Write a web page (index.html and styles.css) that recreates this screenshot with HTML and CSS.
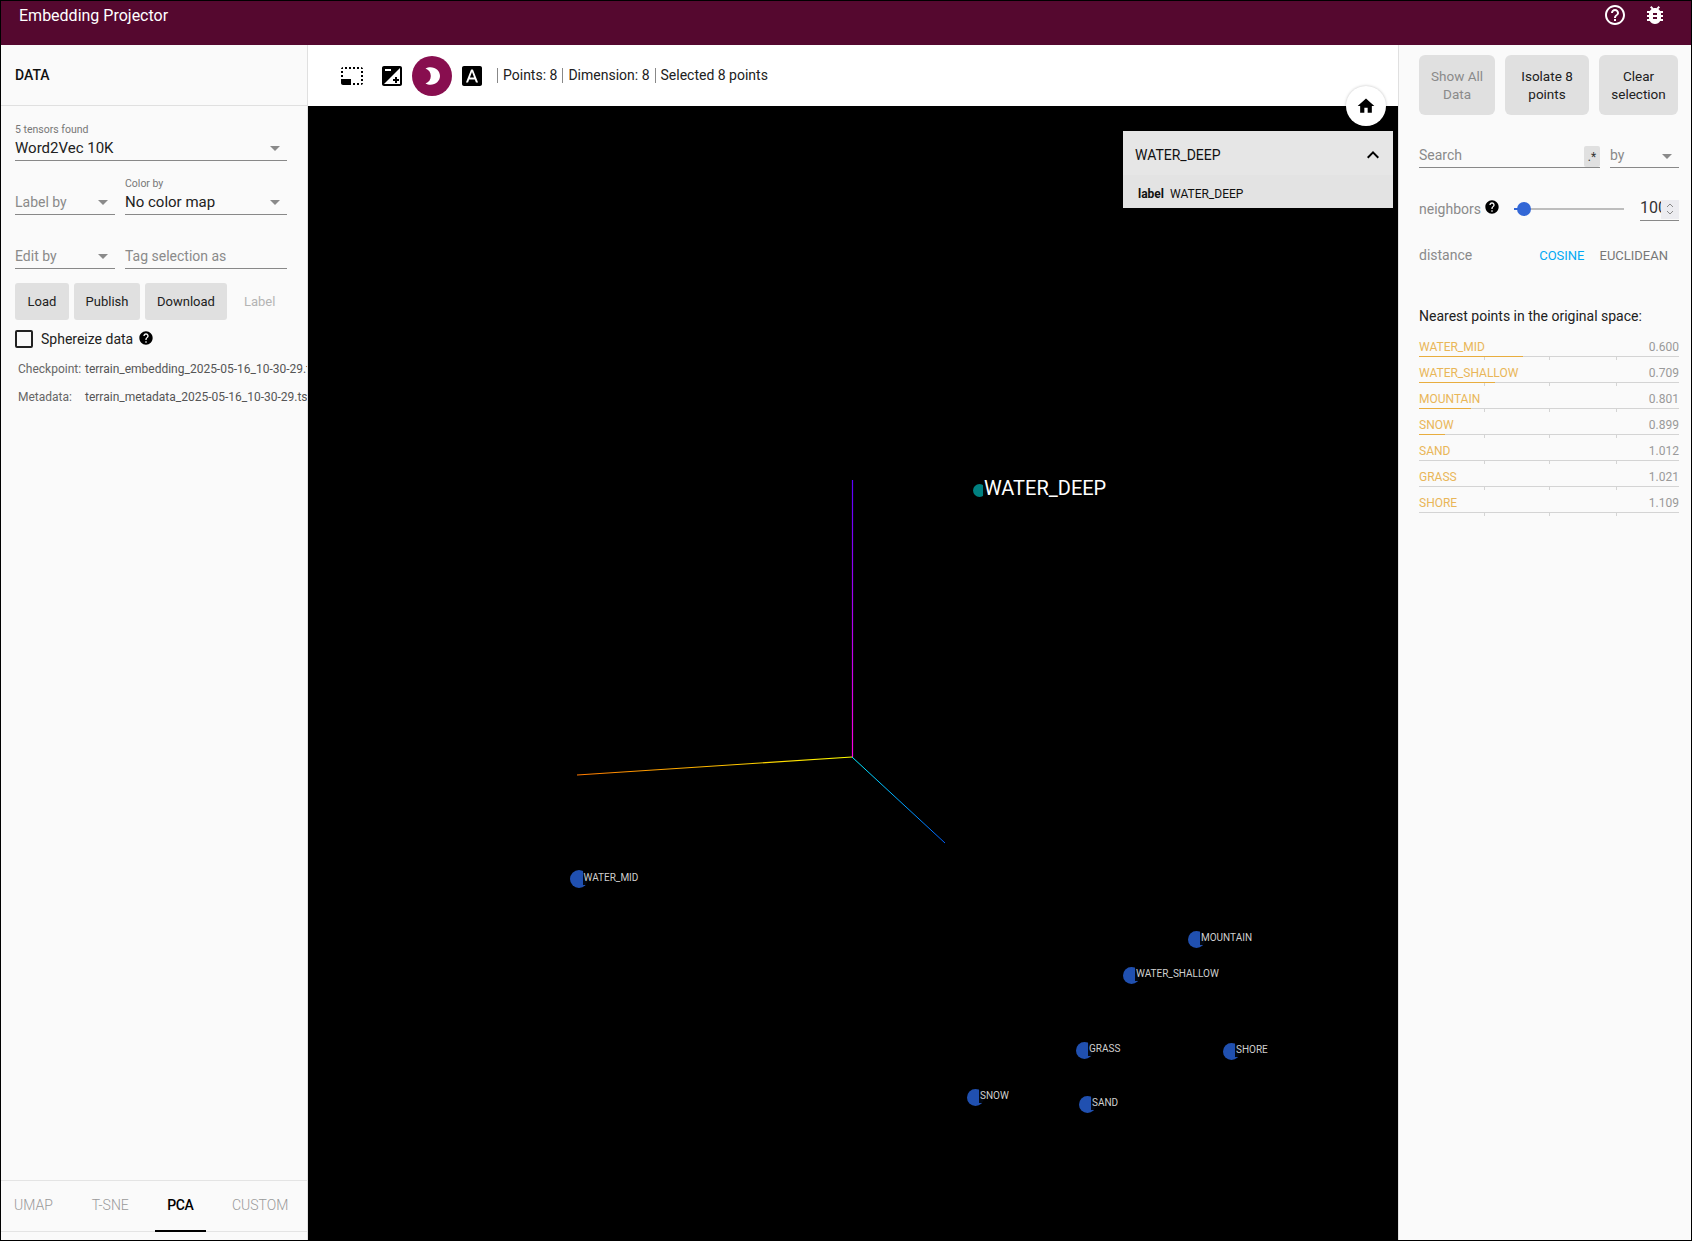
FILE: index.html
```html
<!DOCTYPE html>
<html lang="en">
<head>
    <meta charset="UTF-8">
    <meta name="viewport" content="width=device-width, initial-scale=1.0">
    <title>Embedding Projector</title>
    <link rel="stylesheet" href="styles.css">
</head>
<body>
    <div class="app">
        <header class="topbar">
            <span class="brand">Embedding Projector</span>
            <div class="topbar-icons">
                <svg class="icon" viewBox="0 0 24 24"><path d="M11 18h2v-2h-2v2zm1-16C6.48 2 2 6.48 2 12s4.48 10 10 10 10-4.48 10-10S17.52 2 12 2zm0 18c-4.41 0-8-3.59-8-8s3.59-8 8-8 8 3.59 8 8-3.59 8-8 8zm0-14c-2.21 0-4 1.79-4 4h2c0-1.1.9-2 2-2s2 .9 2 2c0 2-3 1.75-3 5h2c0-2.25 3-2.5 3-5 0-2.21-1.79-4-4-4z"/></svg>
                <svg class="icon" viewBox="0 0 24 24"><path d="M20 8h-2.81c-.45-.78-1.07-1.45-1.82-1.96L17 4.41 15.59 3l-2.17 2.17C12.96 5.06 12.49 5 12 5c-.49 0-.96.06-1.41.17L8.41 3 7 4.41l1.62 1.63C7.88 6.55 7.26 7.22 6.81 8H4v2h2.09c-.05.33-.09.66-.09 1v1H4v2h2v1c0 .34.04.67.09 1H4v2h2.81c1.04 1.79 2.97 3 5.19 3s4.15-1.21 5.19-3H20v-2h-2.09c.05-.33.09-.66.09-1v-1h2v-2h-2v-1c0-.34-.04-.67-.09-1H20V8zm-6 8h-4v-2h4v2zm0-4h-4v-2h4v2z"/></svg>
            </div>
        </header>

        <div class="main">
            <!-- Left: data panel -->
            <aside class="data-panel">
                <div class="data-head">DATA</div>
                <div class="data-body">
                    <div class="field">
                        <div class="field-label">5 tensors found</div>
                        <div class="field-value">Word2Vec 10K<span class="caret"></span></div>
                    </div>
                    <div class="field-row">
                        <div class="field narrow">
                            <div class="field-label"></div>
                            <div class="field-value muted">Label by<span class="caret"></span></div>
                        </div>
                        <div class="field wide">
                            <div class="field-label">Color by</div>
                            <div class="field-value">No color map<span class="caret"></span></div>
                        </div>
                    </div>
                    <div class="field-row">
                        <div class="field narrow">
                            <div class="field-label"></div>
                            <div class="field-value muted">Edit by<span class="caret"></span></div>
                        </div>
                        <div class="field wide">
                            <div class="field-label"></div>
                            <div class="field-value muted">Tag selection as</div>
                        </div>
                    </div>
                    <div class="data-buttons">
                        <button class="btn btn-load">Load</button>
                        <button class="btn btn-publish">Publish</button>
                        <button class="btn btn-download">Download</button>
                        <span class="btn-label">Label</span>
                    </div>
                    <div class="sphereize">
                        <span class="checkbox"></span>
                        <span>Sphereize data</span>
                        <svg class="help" viewBox="0 0 24 24"><path d="M12 2C6.48 2 2 6.48 2 12s4.48 10 10 10 10-4.48 10-10S17.52 2 12 2zm1 17h-2v-2h2v2zm2.07-7.75l-.9.92C13.45 12.9 13 13.5 13 15h-2v-.5c0-1.1.45-2.1 1.17-2.83l1.24-1.26c.37-.36.59-.86.59-1.41 0-1.1-.9-2-2-2s-2 .9-2 2H8c0-2.21 1.79-4 4-4s4 1.79 4 4c0 .88-.36 1.68-.93 2.25z"/></svg>
                    </div>
                    <div class="file-row file-first"><span class="file-key">Checkpoint:</span><span>terrain_embedding_2025-05-16_10-30-29.tsv</span></div>
                    <div class="file-row"><span class="file-key">Metadata:</span><span>terrain_metadata_2025-05-16_10-30-29.tsv</span></div>
                </div>
                <div class="tabs">
                    <span class="tab">UMAP</span>
                    <span class="tab">T-SNE</span>
                    <span class="tab active">PCA</span>
                    <span class="tab">CUSTOM</span>
                </div>
            </aside>

            <!-- Center: toolbar and scene -->
            <section class="center">
                <div class="toolbar">
                    <svg class="tool" viewBox="0 0 24 24"><path d="M23 15h-2v2h2v-2zm0-4h-2v2h2v-2zm0 8h-2v2c1 0 2-1 2-2zM15 3h-2v2h2V3zm8 4h-2v2h2V7zm-2-4v2h2c0-1-1-2-2-2zM3 21h8v-6H1v4c0 1.1.9 2 2 2zM3 7H1v2h2V7zm12 12h-2v2h2v-2zm4-16h-2v2h2V3zm0 16h-2v2h2v-2zM3 3C2 3 1 4 1 5h2V3zm0 8H1v2h2v-2zm8-8H9v2h2V3zM7 3H5v2h2V3z"/></svg>
                    <svg class="tool tool-contrast" viewBox="0 0 24 24"><path d="M15 17v2h2v-2h2v-2h-2v-2h-2v2h-2v2h2zm5-15H4c-1.1 0-2 .9-2 2v16c0 1.1.9 2 2 2h16c1.1 0 2-.9 2-2V4c0-1.1-.9-2-2-2zM5 5h6v2H5V5zm15 15H4L20 4v16z"/></svg>
                    <span class="night-btn">
                        <svg class="tool" viewBox="0 0 24 24"><path d="M5.5 4.5C7 3.6 8.8 3.3 10.5 3.3c5.3 0 9.5 3.9 9.5 8.7s-4.2 8.700-9.500 8.700c-1.700 0-3.500-.3-5-1.200 3.300-1.100 5.300-4 5.300-7.500s-2-6.400-5.300-7.500z"/></svg>
                    </span>
                    <svg class="tool" viewBox="0 0 24 24"><path d="M9.93 13.5h4.14L12 7.98zM20 2H4c-1.1 0-2 .9-2 2v16c0 1.1.9 2 2 2h16c1.1 0 2-.9 2-2V4c0-1.1-.9-2-2-2zm-4.05 16.5l-1.14-3H9.17l-1.12 3H5.96l5.11-13h1.86l5.11 13h-2.09z"/></svg>
                    <div class="stats">
                        <span class="stat">Points: 8</span>
                        <span class="stat">Dimension: 8</span>
                        <span class="stat">Selected 8 points</span>
                    </div>
                </div>

                <div class="scene">
                    <svg class="axes" width="1090" height="1134">
                        <defs>
                            <linearGradient id="axisY" gradientUnits="userSpaceOnUse" x1="544" y1="374" x2="544" y2="651">
                                <stop offset="0" stop-color="#5a00ff"/>
                                <stop offset="1" stop-color="#ff00e0"/>
                            </linearGradient>
                            <linearGradient id="axisX" gradientUnits="userSpaceOnUse" x1="269" y1="669" x2="544" y2="651">
                                <stop offset="0" stop-color="#ff7a00"/>
                                <stop offset="1" stop-color="#ffff00"/>
                            </linearGradient>
                            <linearGradient id="axisZ" gradientUnits="userSpaceOnUse" x1="544" y1="651" x2="637" y2="737">
                                <stop offset="0" stop-color="#00f0ff"/>
                                <stop offset="1" stop-color="#0060ff"/>
                            </linearGradient>
                        </defs>
                        <line x1="544.5" y1="374" x2="544.5" y2="651" stroke="url(#axisY)" stroke-width="1.2"/>
                        <line x1="269" y1="669" x2="544" y2="651" stroke="url(#axisX)" stroke-width="1.2"/>
                        <line x1="544" y1="651" x2="637" y2="737" stroke="url(#axisZ)" stroke-width="1"/>
                    </svg>

                    <div class="pin selected" style="left:671px;top:384px"><span class="dot"></span><span class="pin-label">WATER_DEEP</span></div>
                    <div class="pin big" style="left:270.5px;top:773px"><span class="dot"></span><span class="pin-label">WATER_MID</span></div>
                    <div class="pin" style="left:888px;top:833px"><span class="dot"></span><span class="pin-label">MOUNTAIN</span></div>
                    <div class="pin" style="left:823px;top:869px"><span class="dot"></span><span class="pin-label">WATER_SHALLOW</span></div>
                    <div class="pin" style="left:776px;top:944px"><span class="dot"></span><span class="pin-label">GRASS</span></div>
                    <div class="pin" style="left:923px;top:945px"><span class="dot"></span><span class="pin-label">SHORE</span></div>
                    <div class="pin" style="left:667px;top:991px"><span class="dot"></span><span class="pin-label">SNOW</span></div>
                    <div class="pin" style="left:779px;top:998px"><span class="dot"></span><span class="pin-label">SAND</span></div>

                    <div class="inspector">
                        <div class="inspector-head">
                            <span>WATER_DEEP</span>
                            <svg class="chevron" viewBox="0 0 24 24"><path d="M7.41 15.41L12 10.83l4.59 4.58L18 14l-6-6-6 6z"/></svg>
                        </div>
                        <div class="inspector-row"><b>label</b><span>WATER_DEEP</span></div>
                    </div>
                </div>

                <span class="home-btn">
                    <svg viewBox="0 0 24 24"><path d="M10 20v-6h4v6h5v-8h3L12 3 2 12h3v8z"/></svg>
                </span>
            </section>

            <!-- Right: inspector panel -->
            <aside class="inspect-panel">
                <div class="inspect-buttons">
                    <button class="btn btn-show" disabled>Show All Data</button>
                    <button class="btn btn-isolate">Isolate 8 points</button>
                    <button class="btn btn-clear">Clear selection</button>
                </div>
                <div class="search-row">
                    <div class="search-box">Search<span class="regex">.*</span></div>
                    <div class="by-box">by<span class="caret"></span></div>
                </div>
                <div class="neighbors-row">
                    <span class="neighbors-label">neighbors</span>
                    <svg class="help" viewBox="0 0 24 24"><path d="M12 2C6.48 2 2 6.48 2 12s4.48 10 10 10 10-4.48 10-10S17.52 2 12 2zm1 17h-2v-2h2v2zm2.07-7.75l-.9.92C13.45 12.9 13 13.5 13 15h-2v-.5c0-1.1.45-2.1 1.17-2.83l1.24-1.26c.37-.36.59-.86.59-1.41 0-1.1-.9-2-2-2s-2 .9-2 2H8c0-2.21 1.79-4 4-4s4 1.79 4 4c0 .88-.36 1.68-.93 2.25z"/></svg>
                    <div class="slider"><span class="slider-thumb"></span></div>
                    <div class="number-box">
                        <span class="number-text">100</span>
                        <span class="spinner">
                            <svg viewBox="0 0 10 18"><path d="M2 7l3-3 3 3M2 11l3 3 3-3" fill="none" stroke="#8a8a8a" stroke-width="1"/></svg>
                        </span>
                    </div>
                </div>
                <div class="distance-row">
                    <span class="distance-label">distance</span>
                    <span class="distance-opt active">COSINE</span>
                    <span class="distance-opt">EUCLIDEAN</span>
                </div>
                <div class="nearest-title">Nearest points in the original space:</div>
                <ul class="nearest">
                    <li class="near"><div class="near-text"><span>WATER_MID</span><span class="near-val">0.600</span></div><div class="near-bar"><i style="width:104px"></i></div></li>
                    <li class="near"><div class="near-text"><span>WATER_SHALLOW</span><span class="near-val">0.709</span></div><div class="near-bar"><i style="width:76px"></i></div></li>
                    <li class="near"><div class="near-text"><span>MOUNTAIN</span><span class="near-val">0.801</span></div><div class="near-bar"><i style="width:52px"></i></div></li>
                    <li class="near"><div class="near-text"><span>SNOW</span><span class="near-val">0.899</span></div><div class="near-bar"><i style="width:26px"></i></div></li>
                    <li class="near"><div class="near-text"><span>SAND</span><span class="near-val">1.012</span></div><div class="near-bar"></div></li>
                    <li class="near"><div class="near-text"><span>GRASS</span><span class="near-val">1.021</span></div><div class="near-bar"></div></li>
                    <li class="near"><div class="near-text"><span>SHORE</span><span class="near-val">1.109</span></div><div class="near-bar"></div></li>
                </ul>
            </aside>
        </div>
    </div>
</body>
</html>
```

FILE: styles.css
```css
* {
    box-sizing: border-box;
}

body {
    margin: 0;
    font-family: Roboto, "Noto Sans", sans-serif;
    color: #212121;
}

.app {
    display: flex;
    flex-direction: column;
    height: 100vh;
    border: 1px solid #000;
    overflow: hidden;
}

/* Top bar */
.topbar {
    display: flex;
    justify-content: space-between;
    flex: 0 0 44px;
    background-color: #55082f;
    color: #fff;
}

.brand {
    margin-left: 18px;
    font-size: 16px;
    line-height: 30px;
}

.topbar-icons {
    display: flex;
    gap: 16px;
    margin: 2px 24px 0 0;
}

.icon {
    width: 24px;
    height: 24px;
    fill: #fff;
}

.main {
    display: flex;
    flex: 1;
    min-height: 0;
}

/* Data panel */
.data-panel {
    display: flex;
    flex-direction: column;
    flex: 0 0 307px;
    background-color: #fafafa;
    border-right: 1px solid #e0e0e0;
    overflow: hidden;
}

.data-head {
    flex: 0 0 61px;
    padding-left: 14px;
    font-size: 14px;
    font-weight: 500;
    line-height: 60px;
    color: #111;
    border-bottom: 1px solid #e0e0e0;
}

.data-body {
    flex: 1;
    padding: 17px 20px 0 14px;
    white-space: nowrap;
}

.field {
    margin-bottom: 16px;
}

.field-row {
    display: flex;
    gap: 10px;
}

.narrow {
    flex: 0 0 100px;
}

.wide {
    flex: 1;
}

.field-label {
    height: 12px;
    font-size: 10.5px;
    line-height: 14px;
    color: #777;
}

.field-value {
    position: relative;
    height: 26px;
    font-size: 15px;
    line-height: 26px;
    color: #212121;
    border-bottom: 1px solid #888;
}

.muted {
    font-size: 14px;
    color: #8a8a8a;
}

.caret {
    position: absolute;
    right: 7px;
    top: 11px;
    border-left: 5px solid transparent;
    border-right: 5px solid transparent;
    border-top: 5px solid #8a8a8a;
}

.btn {
    border: none;
    border-radius: 3px;
    background-color: #e0e0e0;
    font-family: inherit;
    font-size: 13px;
    color: #212121;
    padding: 0;
}

.data-buttons {
    display: flex;
    gap: 5px;
    height: 37px;
    margin-top: -2px;
}

.btn-load {
    width: 54px;
}

.btn-publish {
    width: 66px;
}

.btn-download {
    width: 82px;
}

.btn-label {
    margin-left: 12px;
    font-size: 13px;
    line-height: 37px;
    color: #b4b4b4;
}

.sphereize {
    display: flex;
    align-items: center;
    gap: 8px;
    margin-top: 10px;
    height: 18px;
    font-size: 14px;
}

.checkbox {
    width: 18px;
    height: 18px;
    border: 2px solid #222;
    border-radius: 2px;
}

.help {
    width: 16px;
    height: 16px;
    margin: -2px 0 0 -3px;
}

.file-row {
    display: flex;
    margin: 10px 0 0 3px;
    font-size: 12px;
    line-height: 18px;
    color: #555;
    width: 400px;
}

.file-first {
    margin-top: 12px;
}

.file-key {
    flex: 0 0 67px;
    color: #666;
}

/* Bottom tabs */
.tabs {
    display: flex;
    gap: 13px;
    height: 52px;
    margin-bottom: 8px;
    border-top: 1px solid #e4e4e4;
    border-bottom: 1px solid #e4e4e4;
}

.tab {
    padding: 0 13px;
    font-size: 14px;
    font-weight: 300;
    line-height: 49px;
    color: #999;
}

.tab.active {
    padding: 0 12.5px;
    letter-spacing: -0.4px;
    font-weight: 500;
    color: #000;
    border-bottom: 2px solid #000;
    height: 51px;
}

/* Center */
.center {
    position: relative;
    display: flex;
    flex-direction: column;
    flex: 1;
    min-width: 0;
}

.toolbar {
    display: flex;
    align-items: center;
    gap: 8px;
    flex: 0 0 61px;
    padding-left: 32px;
    background-color: #fff;
}

.tool {
    width: 24px;
    height: 24px;
    fill: #000;
}

.tool-contrast {
    margin-left: 8px;
}

.night-btn {
    display: flex;
    align-items: center;
    justify-content: center;
    width: 40px;
    height: 40px;
    border-radius: 50%;
    background-color: #880e4f;
}

.night-btn .tool {
    fill: #fff;
}

.stats {
    display: flex;
    margin-left: 5px;
    font-size: 14px;
    color: #212121;
}

.stat {
    padding-left: 5px;
    margin-right: 5px;
    line-height: 15px;
    border-left: 1px solid #888;
}

.scene {
    position: relative;
    flex: 1;
    background-color: #000;
    overflow: hidden;
}

.axes {
    position: absolute;
    left: 0;
    top: 0;
}

.pin {
    position: absolute;
    width: 0;
    height: 0;
}

.dot {
    position: absolute;
    left: -8.5px;
    top: -8.5px;
    width: 17px;
    height: 17px;
    border-radius: 50%;
    background-color: #2050b0;
}

.pin.big .dot {
    left: -9px;
    top: -9px;
    width: 18px;
    height: 18px;
}

.pin.selected .dot {
    left: -6.5px;
    top: -6.5px;
    width: 13px;
    height: 13px;
    background-color: #008080;
}

/* Dark backing bites into the dot, as the canvas labels do */
.pin-label {
    position: absolute;
    left: 4px;
    top: -8px;
    padding-left: 1px;
    font-size: 10px;
    line-height: 14px;
    color: #cfcfcf;
    white-space: nowrap;
    background-color: rgba(0, 0, 0, 0.9);
}

.pin.selected .pin-label {
    top: -15px;
    font-size: 20px;
    line-height: 26px;
    color: #fff;
}

.inspector {
    position: absolute;
    top: 25px;
    right: 5px;
    width: 270px;
    background-color: #e3e3e3;
}

.inspector-head {
    display: flex;
    justify-content: space-between;
    align-items: center;
    height: 44px;
    padding: 4px 8px 0 12px;
    font-size: 14px;
    color: #111;
    background-color: #e6e6e6;
}

.chevron {
    width: 24px;
    height: 24px;
}

.inspector-row {
    display: flex;
    gap: 6px;
    height: 33px;
    padding: 10px 0 0 15px;
    font-size: 12px;
    line-height: 18px;
    color: #111;
}

.home-btn {
    position: absolute;
    top: 41px;
    right: 12px;
    display: flex;
    align-items: center;
    justify-content: center;
    width: 40px;
    height: 40px;
    border-radius: 50%;
    background-color: #fff;
    box-shadow: 0 0 3px rgba(0, 0, 0, 0.25);
}

.home-btn svg {
    width: 20px;
    height: 20px;
}

/* Right panel */
.inspect-panel {
    flex: 0 0 293px;
    min-width: 0;
    padding: 10px 12px 0 20px;
    background-color: #fafafa;
    border-left: 1px solid #e0e0e0;
}

.inspect-buttons {
    display: flex;
    gap: 10px;
    height: 60px;
}

.inspect-buttons .btn {
    border-radius: 6px;
    font-size: 13.5px;
    line-height: 18px;
}

.btn-show {
    width: 76px;
    color: #8a8a8a;
}

.btn-isolate {
    width: 84px;
}

.btn-clear {
    width: 79px;
}

.search-row {
    display: flex;
    gap: 10px;
    margin-top: 31px;
    height: 22px;
    font-size: 14px;
    line-height: 18px;
    color: #8a8a8a;
}

.search-box {
    position: relative;
    flex: 0 0 181px;
    border-bottom: 1px solid #888;
}

.regex {
    position: absolute;
    right: 0;
    top: 0;
    width: 16px;
    height: 21px;
    background-color: #e0e0e0;
    border-radius: 2px;
    font-size: 12px;
    line-height: 22px;
    text-align: center;
    color: #333;
}

.by-box {
    position: relative;
    flex: 1;
    border-bottom: 1px solid #888;
}

.by-box .caret {
    right: 7px;
    top: 8px;
}

.neighbors-row {
    display: flex;
    align-items: center;
    height: 24px;
    margin-top: 29px;
    font-size: 14px;
    color: #8a8a8a;
}

.neighbors-row .help {
    margin-left: 3px;
    margin-top: -4px;
    fill: #000;
}

.slider {
    position: relative;
    flex: 0 0 110px;
    height: 2px;
    margin-left: 14px;
    background-color: #bdbdbd;
}

.slider-thumb {
    position: absolute;
    left: 3px;
    top: -6px;
    width: 14px;
    height: 14px;
    border-radius: 50%;
    background-color: #3367d6;
}

.slider::before {
    content: '';
    position: absolute;
    left: 0;
    top: 0;
    width: 8px;
    height: 2px;
    background-color: #3367d6;
}

.number-box {
    position: relative;
    flex: 0 0 39px;
    height: 24px;
    margin-left: 16px;
    font-size: 16px;
    line-height: 22px;
    color: #333;
    border-bottom: 1px solid #888;
    overflow: hidden;
}

.spinner {
    position: absolute;
    right: 0;
    top: 3px;
    width: 18px;
    height: 19px;
    background-color: #ececf0;
    text-align: center;
}

.spinner svg {
    width: 10px;
    height: 18px;
}

.distance-row {
    display: flex;
    align-items: center;
    height: 20px;
    margin-top: 24px;
    padding-right: 11px;
    font-size: 14px;
    color: #8a8a8a;
}

.distance-opt {
    font-size: 13px;
    margin-left: 15px;
    color: #777;
}

.distance-opt.active {
    margin-left: auto;
    color: #03a9f4;
}

.nearest-title {
    margin-top: 42px;
    font-size: 14px;
    line-height: 18px;
    color: #212121;
}

.nearest {
    list-style: none;
    margin: 12px 0 0;
    padding: 0;
}

.near {
    height: 26px;
}

.near-text {
    display: flex;
    justify-content: space-between;
    height: 19px;
    font-size: 12px;
    line-height: 20px;
    color: #e9b658;
}

.near-val {
    color: #999;
}

.near-bar {
    position: relative;
    height: 1px;
    background-color: #d4d4d4;
}

.near-bar i {
    display: block;
    height: 1px;
    background-color: #e8ad3e;
}

.near-bar::after {
    content: '';
    position: absolute;
    left: 65px;
    top: 1px;
    width: 131px;
    height: 3px;
    border-left: 1px solid #d4d4d4;
    border-right: 1px solid #d4d4d4;
}

.near-bar::before {
    content: '';
    position: absolute;
    left: 130px;
    top: 1px;
    width: 1px;
    height: 3px;
    background-color: #d4d4d4;
}
```
